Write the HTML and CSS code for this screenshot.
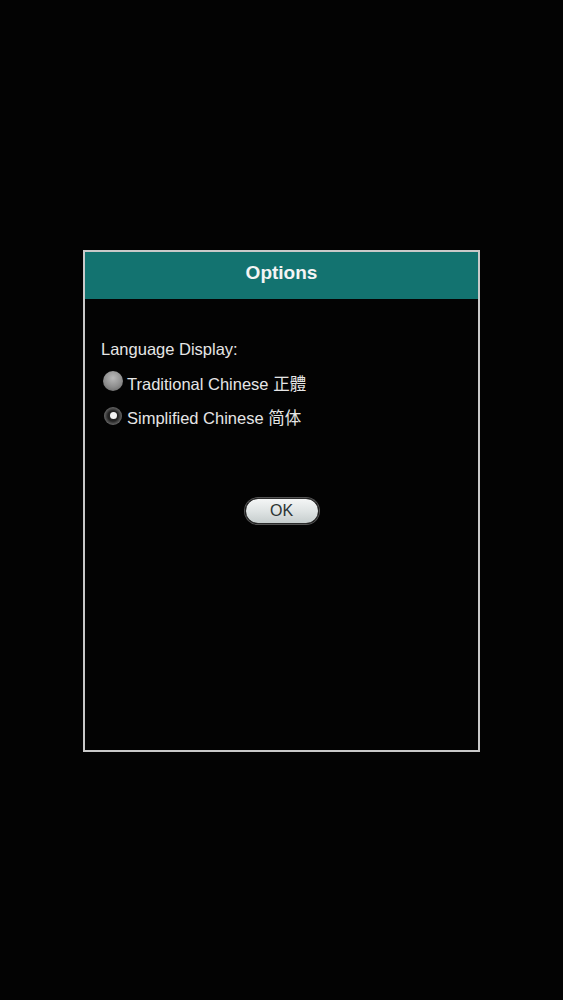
FILE: index.html
```html
<!DOCTYPE html>
<html>
<head>
<meta charset="utf-8">
<link rel="stylesheet" href="styles.css">
</head>
<body>
<div class="dialog">
  <div class="header">Options</div>
  <div class="content">
    <div class="label">Language Display:</div>
    <div class="option">
      <span class="radio off"></span>
      <span class="opt-text">Traditional Chinese 正體</span>
    </div>
    <div class="option">
      <span class="radio on"><span class="dot"></span></span>
      <span class="opt-text">Simplified Chinese 简体</span>
    </div>
    <div class="actions">
      <button class="ok">OK</button>
    </div>
  </div>
</div>
</body>
</html>
```
FILE: styles.css
```css
html, body {
  margin: 0;
  padding: 0;
  background: #030303;
  font-family: "Liberation Sans", Arial, "Noto Sans CJK SC", sans-serif;
}
body {
  width: 563px;
  height: 1000px;
  padding-top: 250px;
  padding-left: 83px;
  box-sizing: border-box;
}
.dialog {
  width: 397px;
  height: 502px;
  box-sizing: border-box;
  border: 2px solid #c9c9c9;
  background: #030303;
  display: flex;
  flex-direction: column;
}
.header {
  height: 47px;
  background: #137370;
  color: #f4f4f4;
  font-weight: bold;
  font-size: 19px;
  display: flex;
  align-items: center;
  justify-content: center;
  padding-bottom: 6px;
  box-sizing: border-box;
}
.content {
  padding: 41px 0 0 16px;
  color: #e6e6e6;
  font-size: 16.5px;
}
.label {
  line-height: 19px;
  margin-bottom: 9px;
}
.option {
  display: flex;
  align-items: center;
  height: 30px;
  margin-bottom: 4px;
}
.radio {
  width: 20px;
  height: 20px;
  border-radius: 50%;
  margin-left: 2px;
  margin-right: 4px;
  box-sizing: border-box;
  display: flex;
  align-items: center;
  justify-content: center;
  flex-shrink: 0;
}
.radio.off {
  background: radial-gradient(circle at 50% 35%, #b9b9b9 0%, #8e8e8e 55%, #5e5e5e 100%);
  margin-top: -5px;
}
.radio.on {
  width: 18px;
  height: 18px;
  margin-left: 3px;
  margin-right: 5px;
  background: radial-gradient(circle, #222 40%, #666 70%, #3a3a3a 100%);
  margin-top: -3px;
}
.dot {
  width: 7px;
  height: 7px;
  border-radius: 50%;
  background: #f4f4f4;
}
.opt-text {
  font-family: "Liberation Sans", Arial, "Noto Sans CJK TC", "Noto Sans CJK SC", sans-serif;
}
.actions {
  display: flex;
  justify-content: center;
  margin-top: 66px;
  padding-right: 16px;
}
.ok {
  width: 74px;
  height: 26px;
  border-radius: 13px;
  border: 1px solid #2a2a2a;
  background: linear-gradient(#f4f6f6 0%, #dfe4e4 50%, #c6cdcd 100%);
  color: #2c3434;
  font-family: "Liberation Sans", Arial, sans-serif;
  font-size: 16px;
  padding: 0;
  box-shadow: 0 0 0 1px #555;
}
```
